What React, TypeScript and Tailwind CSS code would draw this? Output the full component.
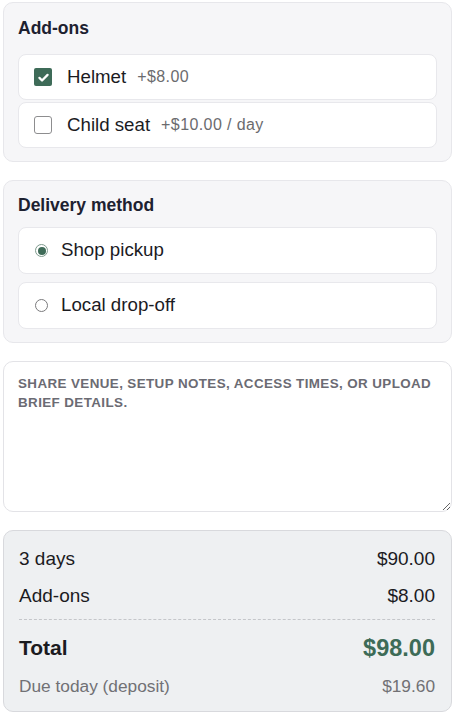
import { useState } from "react";

const addons = [
  { id: "helmet", name: "Helmet", price: "+$8.00" },
  { id: "seat", name: "Child seat", price: "+$10.00 / day" },
];

const methods = [
  { id: "pickup", name: "Shop pickup" },
  { id: "dropoff", name: "Local drop-off" },
];

const Check = ({ on }: { on: boolean }) =>
  on ? (
    <span className="flex h-[18px] w-[18px] shrink-0 items-center justify-center rounded-[2px] bg-[#3e6b58]">
      <svg width="13" height="13" viewBox="0 0 16 16" fill="none">
        <path d="M3 8.5l3.2 3.2L13 4.8" stroke="#fff" strokeWidth="2.8" strokeLinecap="round" strokeLinejoin="round" />
      </svg>
    </span>
  ) : (
    <span className="h-[18px] w-[18px] shrink-0 rounded-[3px] border border-[#8d8d8f] bg-white" />
  );

const Radio = ({ on }: { on: boolean }) =>
  on ? (
    <span className="flex h-[13px] w-[13px] shrink-0 items-center justify-center rounded-full border border-[#7f9b8e] bg-white">
      <span className="h-[8px] w-[8px] rounded-full bg-[#3e6b58]" />
    </span>
  ) : (
    <span className="h-[13px] w-[13px] shrink-0 rounded-full border border-[#7a7a7c] bg-white" />
  );

const App = () => {
  const [picked, setPicked] = useState<string[]>(["helmet"]);
  const [method, setMethod] = useState("pickup");

  const toggle = (id: string) =>
    setPicked((p) => (p.includes(id) ? p.filter((x) => x !== id) : [...p, id]));

  return (
    <div className="flex w-full flex-col gap-[18px] bg-white px-[3px] pt-[2px] font-['Liberation_Sans',Arial,sans-serif] text-[#1b1b1f]">
      {/* add-ons */}
      <div className="rounded-[10px] border border-[#e7e7eb] bg-[#f6f6f8] px-[14px] pt-[13px] pb-[13px]">
        <h2 className="text-[17.5px] leading-[24px] font-bold text-[#1d2130]">Add-ons</h2>
        <div className="mt-[14px] flex flex-col gap-[2px]">
          {addons.map((a) => (
            <div
              key={a.id}
              onClick={() => toggle(a.id)}
              className="flex h-[46px] cursor-pointer items-center gap-[15px] rounded-[8px] border border-[#e8e8ec] bg-white px-[15px]"
            >
              <Check on={picked.includes(a.id)} />
              <span className="text-[18.7px] leading-none">{a.name}</span>
              <span className="-ml-[4px] text-[16px] leading-none tracking-[0.4px] text-[#6b6b6e]">{a.price}</span>
            </div>
          ))}
        </div>
      </div>

      {/* delivery */}
      <div className="rounded-[10px] border border-[#e7e7eb] bg-[#f6f6f8] px-[14px] pt-[12px] pb-[13px]">
        <h2 className="text-[17.5px] leading-[24px] font-bold text-[#1d2130]">Delivery method</h2>
        <div className="mt-[10px] flex flex-col gap-[8px]">
          {methods.map((m) => (
            <div
              key={m.id}
              onClick={() => setMethod(m.id)}
              className="flex h-[47px] cursor-pointer items-center gap-[13px] rounded-[8px] border border-[#e8e8ec] bg-white px-[16px]"
            >
              <Radio on={method === m.id} />
              <span className="text-[18.7px] leading-none">{m.name}</span>
            </div>
          ))}
        </div>
      </div>

      <textarea
        placeholder="SHARE VENUE, SETUP NOTES, ACCESS TIMES, OR UPLOAD BRIEF DETAILS."
        className="h-[151px] w-full rounded-[10px] border border-[#e3e3e7] bg-white px-[14px] pt-[12px] text-[13.4px] leading-[19px] font-bold tracking-[0.4px] text-[#1b1b1f] outline-none placeholder:text-[#6b6b73]"
      />

      {/* summary */}
      <div className="rounded-[10px] border border-[#d8d9dd] bg-[#eef0f2] pt-[15px] pr-[16px] pb-[13px] pl-[15px]">
        <div className="flex justify-between text-[19px] leading-[26px]">
          <span>3 days</span>
          <span>$90.00</span>
        </div>
        <div className="mt-[11px] flex justify-between text-[19px] leading-[26px]">
          <span>Add-ons</span>
          <span>$8.00</span>
        </div>
        <div className="mt-[10px] border-t border-dashed border-[#c4c6ca]" />
        <div className="mt-[14px] flex items-center justify-between leading-[28px]">
          <span className="text-[21px] font-bold">Total</span>
          <span className="text-[23.5px] font-bold text-[#3d6b57]">$98.00</span>
        </div>
        <div className="mt-[12px] flex justify-between text-[17.3px] leading-[24px] text-[#717175]">
          <span>Due today (deposit)</span>
          <span>$19.60</span>
        </div>
      </div>
    </div>
  );
};

export default App;
